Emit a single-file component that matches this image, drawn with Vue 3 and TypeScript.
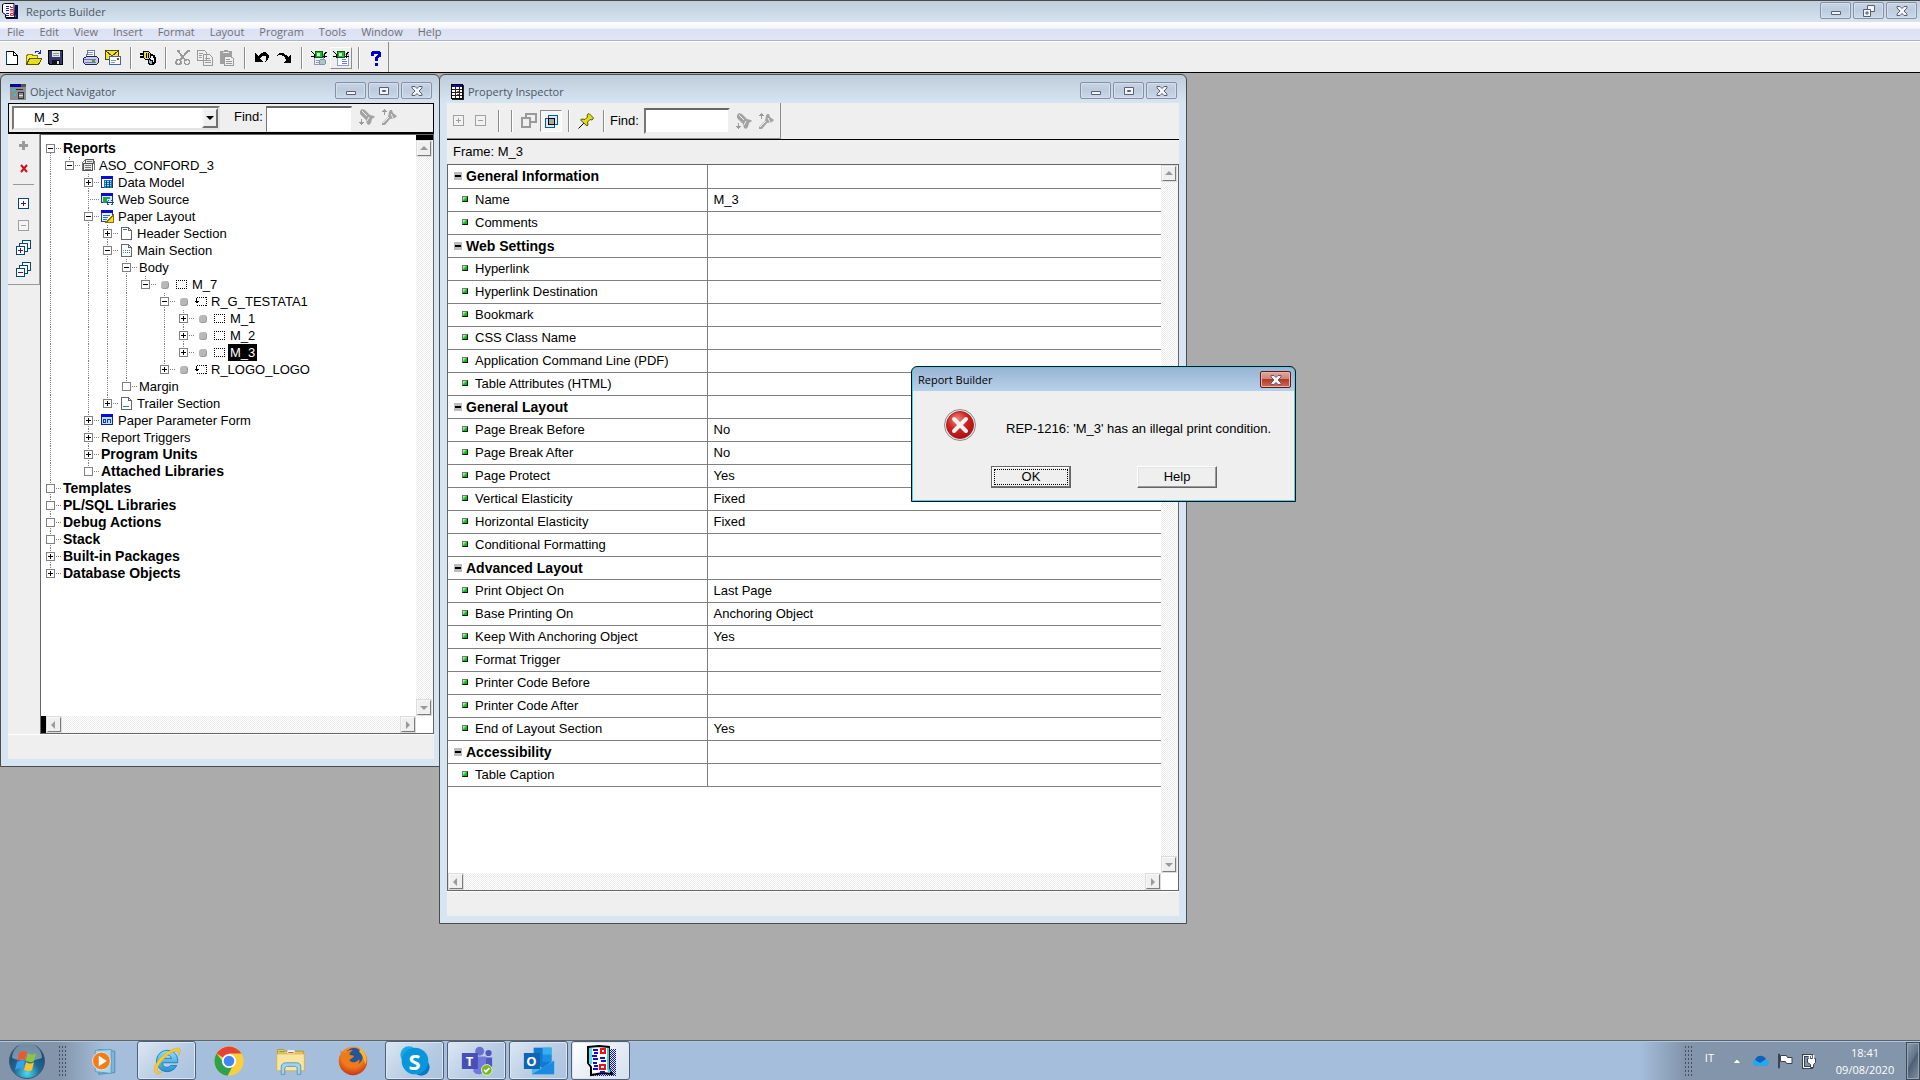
<script setup lang="ts">
import { ref } from 'vue'

interface TreeNode {
  label: string
  bold?: boolean
  icon?: string
  dot?: boolean
  state?: 'open' | 'closed' | 'empty' | 'leaf'
  children?: TreeNode[]
}

interface TreeRow extends TreeNode {
  guides: boolean[]
  last: boolean
  first: boolean
}

interface Property {
  name: string
  value?: string
  section?: boolean
}

interface Task {
  icon: string
  label: string
  open?: boolean
  active?: boolean
  mark?: string
}

const menus = ['File', 'Edit', 'View', 'Insert', 'Format', 'Layout', 'Program', 'Tools', 'Window', 'Help']

const toolGroups: { icon: string; label: string; raised?: boolean }[][] = [
  [{ icon: 'new', label: 'New' }, { icon: 'open', label: 'Open' }, { icon: 'save', label: 'Save' }],
  [{ icon: 'print', label: 'Print' }, { icon: 'mail', label: 'Mail' }],
  [{ icon: 'connect', label: 'Connect' }],
  [{ icon: 'cut', label: 'Cut' }, { icon: 'copy', label: 'Copy' }, { icon: 'paste', label: 'Paste' }],
  [{ icon: 'undo', label: 'Undo' }, { icon: 'redo', label: 'Redo' }],
  [{ icon: 'runweb', label: 'Run Web Layout' }, { icon: 'runpaper', label: 'Run Paper Layout', raised: true }],
  [{ icon: 'help', label: 'Help' }],
]

const tree: TreeNode[] = [
  {
    label: 'Reports', bold: true, state: 'open', children: [
      {
        label: 'ASO_CONFORD_3', icon: 't-report', state: 'open', children: [
          { label: 'Data Model', icon: 't-data', state: 'closed' },
          { label: 'Web Source', icon: 't-web', state: 'leaf' },
          {
            label: 'Paper Layout', icon: 't-paper', state: 'open', children: [
              { label: 'Header Section', icon: 't-head', state: 'closed' },
              {
                label: 'Main Section', icon: 't-main', state: 'open', children: [
                  {
                    label: 'Body', state: 'open', children: [
                      {
                        label: 'M_7', icon: 't-frame', dot: true, state: 'open', children: [
                          {
                            label: 'R_G_TESTATA1', icon: 't-repeat', dot: true, state: 'open', children: [
                              { label: 'M_1', icon: 't-frame', dot: true, state: 'closed' },
                              { label: 'M_2', icon: 't-frame', dot: true, state: 'closed' },
                              { label: 'M_3', icon: 't-frame', dot: true, state: 'closed' },
                            ],
                          },
                          { label: 'R_LOGO_LOGO', icon: 't-repeat', dot: true, state: 'closed' },
                        ],
                      },
                    ],
                  },
                  { label: 'Margin', state: 'empty' },
                ],
              },
              { label: 'Trailer Section', icon: 't-trail', state: 'closed' },
            ],
          },
          { label: 'Paper Parameter Form', icon: 't-form', state: 'closed' },
          { label: 'Report Triggers', state: 'closed' },
          { label: 'Program Units', bold: true, state: 'closed' },
          { label: 'Attached Libraries', bold: true, state: 'empty' },
        ],
      },
    ],
  },
  { label: 'Templates', bold: true, state: 'empty' },
  { label: 'PL/SQL Libraries', bold: true, state: 'empty' },
  { label: 'Debug Actions', bold: true, state: 'empty' },
  { label: 'Stack', bold: true, state: 'empty' },
  { label: 'Built-in Packages', bold: true, state: 'closed' },
  { label: 'Database Objects', bold: true, state: 'closed' },
]

function flatten(nodes: TreeNode[], guides: boolean[] = []): TreeRow[] {
  return nodes.flatMap((node, i) => {
    const last = i === nodes.length - 1
    const row: TreeRow = { ...node, guides, last, first: guides.length === 0 && i === 0 }
    return [row, ...flatten(node.children ?? [], [...guides, !last])]
  })
}

const rows = flatten(tree)
const selected = ref('M_3')

const properties: Property[] = [
  { name: 'General Information', section: true },
  { name: 'Name', value: 'M_3' },
  { name: 'Comments' },
  { name: 'Web Settings', section: true },
  { name: 'Hyperlink' },
  { name: 'Hyperlink Destination' },
  { name: 'Bookmark' },
  { name: 'CSS Class Name' },
  { name: 'Application Command Line (PDF)' },
  { name: 'Table Attributes (HTML)' },
  { name: 'General Layout', section: true },
  { name: 'Page Break Before', value: 'No' },
  { name: 'Page Break After', value: 'No' },
  { name: 'Page Protect', value: 'Yes' },
  { name: 'Vertical Elasticity', value: 'Fixed' },
  { name: 'Horizontal Elasticity', value: 'Fixed' },
  { name: 'Conditional Formatting' },
  { name: 'Advanced Layout', section: true },
  { name: 'Print Object On', value: 'Last Page' },
  { name: 'Base Printing On', value: 'Anchoring Object' },
  { name: 'Keep With Anchoring Object', value: 'Yes' },
  { name: 'Format Trigger' },
  { name: 'Printer Code Before' },
  { name: 'Printer Code After' },
  { name: 'End of Layout Section', value: 'Yes' },
  { name: 'Accessibility', section: true },
  { name: 'Table Caption' },
]

const tasks: Task[] = [
  { icon: 'wmp', label: 'Media Player' },
  { icon: 'ie', label: 'Internet Explorer', open: true },
  { icon: 'chrome', label: 'Chrome' },
  { icon: 'explorer', label: 'Explorer' },
  { icon: 'firefox', label: 'Firefox' },
  { icon: 'skype', label: 'Skype', open: true, mark: 'S' },
  { icon: 'teams', label: 'Teams', open: true, mark: 'T' },
  { icon: 'outlook', label: 'Outlook', open: true, mark: 'O' },
  { icon: 'builder', label: 'Reports Builder', open: true, active: true },
]
</script>

<template>
  <div class="screen">
    <svg class="sprite" aria-hidden="true">
      <defs>
        <radialGradient id="g-orb" cx="50%" cy="85%" r="80%">
          <stop offset="0" stop-color="#4fd8f5" /><stop offset=".45" stop-color="#1d6a94" /><stop offset="1" stop-color="#1f3f5c" />
        </radialGradient>
        <radialGradient id="g-err" cx="40%" cy="30%" r="75%">
          <stop offset="0" stop-color="#f08a80" /><stop offset=".5" stop-color="#cf2320" /><stop offset="1" stop-color="#a80d0d" />
        </radialGradient>
        <linearGradient id="g-ie" x1="0" y1="0" x2="0" y2="1">
          <stop offset="0" stop-color="#8fe0fa" /><stop offset="1" stop-color="#2292d4" />
        </linearGradient>
        <radialGradient id="g-ff" cx="50%" cy="30%" r="70%">
          <stop offset="0" stop-color="#ffc229" /><stop offset=".6" stop-color="#f0791a" /><stop offset="1" stop-color="#c93518" />
        </radialGradient>
        <pattern id="p-mesh" width="2" height="2" patternUnits="userSpaceOnUse">
          <path d="M0 0h1v1h-1zM1 1h1v1h-1z" fill="#1818a0" />
        </pattern>
      </defs>
      <symbol id="builder" viewBox="0 0 32 32">
        <path d="M8 4h23v27H8z" fill="url(#p-mesh)" />
        <path d="M3 2l11-1 10 1v22l3 5-9-1-12 2V22l-3-4z" fill="#fff" stroke="#000" stroke-width="2" />
        <path d="M4 3h3v16H4z" fill="#58e0e8" />
        <path d="M22 3h2v20l2 4h-3l-1-3z" fill="#38d8e0" />
        <path d="M8 5h5M9 8h4M7 11h5M8 14h5M8 18h4M9 21h4M8 24h5M15 13h5M16 16h5M15 27h5" stroke="#1010d8" stroke-width="2" />
        <path d="M16 4h4v4h-4zM15 20h5v4h-5z" fill="#fff" stroke="#f01010" stroke-width="2" />
      </symbol>
      <symbol id="builder-small" viewBox="0 0 16 16">
        <path d="M3 2h13v14H4z" fill="#101048" />
        <path d="M0.500 1.500l2-1h9.500v11l1 3H3.500v-3l-3-2z" fill="#fff" stroke="#000" />
        <path d="M12 1h1v10l1 3h-1z" fill="#5a78e0" />
        <path d="M4 3.500h3M4 5.500h3M4 7.500h3M4 10.500h3M4 12.500h3" stroke="#1818e8" />
        <path d="M8.500 3v1.500H11M8 6.500h3M8 8h3" fill="none" stroke="#f02020" />
        <path d="M8.500 10.500h3v2h-3z" fill="#fff" stroke="#f02020" />
      </symbol>
      <symbol id="new" viewBox="0 0 16 16"><path d="M2.500 1.500h7l4 4v9h-11z" fill="#fff" stroke="#000" /><path d="M9.500 1.500v4h4" fill="none" stroke="#000" /><path d="M2 1h1v14h-1z" fill="#00407c" /></symbol>
      <symbol id="open" viewBox="0 0 16 16"><path d="M.5 14V5h1l1-1h3l1 1h5v3" fill="#f5f03c" stroke="#8a8414" /><path d="M.5 14.500L3.500 8.500H16L12.500 14.500z" fill="#e8e010" stroke="#5a5600" /><path d="M9 2.500c2-2 4-1 5 1M14.500 0v4M11.500 3.500h3" fill="none" stroke="#1030c0" /></symbol>
      <symbol id="save" viewBox="0 0 16 16"><path d="M.5.500h14v14H2l-1.500-1.500z" fill="#38386a" stroke="#000" /><path d="M4 1h8v6H4z" fill="#dde6e6" /><path d="M5 3.500h6M5 5.500h6" stroke="#999" /><path d="M4 10h8v5H4z" fill="#111" /><path d="M9 11h2v3H9z" fill="#ddd" /></symbol>
      <symbol id="print" viewBox="0 0 16 16"><path d="M5 .5h6l1 6H3.500z" fill="#fff" stroke="#5878b8" /><path d="M5 2.500h5M5 4.500h5" stroke="#8899bb" /><path d="M.5 8.500l3-2h10l2 2v4l-2 2h-11l-2-2z" fill="#c8ccea" stroke="#222244" /><path d="M1 9.500h12M2 12.500h11" stroke="#7077b0" /><path d="M9 10h3v2H9z" fill="#30b030" /></symbol>
      <symbol id="mail" viewBox="0 0 16 16"><path d="M.5.500h13v9H.5z" fill="#f4e820" stroke="#504800" /><path d="M1 1l6 5 6-5" fill="none" stroke="#504800" /><path d="M4.500 6.500h11v8h-11z" fill="#fff" stroke="#4068a8" /><path d="M6 10.500h5M6 12.500h4" stroke="#7aa0d0" /><path d="M12 8h2v2h-2z" fill="#e02020" /></symbol>
      <symbol id="connect" viewBox="0 0 16 16"><path d="M0 3.500h4M0 6.500h4" stroke="#000" stroke-width="2" /><path d="M3.500 1.500h5l2 2v4l-2 2h-3l-2-2z" fill="#e4dc50" stroke="#000" /><path d="M6 3v5M8.500 3v5" stroke="#000" /><path d="M10 4c4 1 5 3 5 6s-1 4-3 4" fill="none" stroke="#000" stroke-width="2" /><path d="M8.500 9.500l4 1v4h-3l-1-2z" fill="#7fb4dc" stroke="#000" /></symbol>
      <symbol id="cut" viewBox="0 0 16 16"><path d="M13 1L5 10M3 1l8 10M2 1h3M12 1h3" fill="none" stroke="#9a9a9a" stroke-width="2" /><circle cx="3.500" cy="12" r="2.500" fill="none" stroke="#9a9a9a" stroke-width="1.500" /><circle cx="12" cy="12" r="2.500" fill="none" stroke="#9a9a9a" stroke-width="1.500" /></symbol>
      <symbol id="copy" viewBox="0 0 16 16"><path d="M.5.500h7l2 2v8h-9zM6.500 4.500h6l3 3v8h-9z" fill="#efefef" stroke="#9a9a9a" /><path d="M2 3.500h4M2 5.500h3M2 7.500h3M8 8.500h5M8 10.500h6M8 12.500h6" stroke="#9a9a9a" /></symbol>
      <symbol id="paste" viewBox="0 0 16 16"><path d="M1 1h3l2-1h2l2 1h3v13H1z" fill="#a0a0a0" /><path d="M4 2.500h6" stroke="#eee" /><path d="M5.500 6.500h6l3 2v7h-9z" fill="#efefef" stroke="#999" /><path d="M7 9.500h4M7 11.500h6M7 13.500h6" stroke="#999" /></symbol>
      <symbol id="undo" viewBox="0 0 16 16"><path d="M1 3v9h8l-3-3c2-3 5-4 6-3 1 2 0 4-1 7 4-3 5-8 2-10-3-2-7 0-9 3z" fill="#000" /></symbol>
      <symbol id="redo" viewBox="0 0 16 16"><path d="M15 4v9H7l3-3C9 7 6 4 3 5c-1 0-1 1-2 2 0-3 3-5 6-4 3 1 4 3 5 4z" fill="#000" /></symbol>
      <symbol id="runweb" viewBox="0 0 16 16"><path d="M3.500 4.500h9v10h-9z" fill="#eef2f8" stroke="#9098b0" /><path d="M0 1l3 3v4M16 2l-3 2v4M0 6.500h4M11 6.500h5" fill="none" stroke="#000" /><path d="M4.500 1.500h7v6h-7z" fill="#18c020" stroke="#0a5a10" /><path d="M6 3h3v3H6z" fill="#d8ffd8" /><path d="M5 10.500h3M5 12.500h3" stroke="#9098d0" /><circle cx="11.500" cy="12" r="3" fill="#a9cbb8" stroke="#7f8fc0" /></symbol>
      <symbol id="runpaper" viewBox="0 0 16 16"><path d="M4.500 4.500h11v11h-11z" fill="#fff" stroke="#8ca0d8" /><path d="M0 1l3 3v4M16 2l-3 2v4M0 6.500h4M11 6.500h5" fill="none" stroke="#000" /><path d="M4.500 1.500h7v6h-7z" fill="#18c020" stroke="#0a5a10" /><path d="M6 3h3v3H6z" fill="#d8ffd8" /><path d="M9 9.500h4M9 11.500h5M9 13.500h5" stroke="#7078d0" /></symbol>
      <symbol id="help" viewBox="0 0 16 16"><path d="M4.500 5.500V3.500L6 2h4l1.500 1.500v2L8 8v3" fill="none" stroke="#0000c8" stroke-width="3" /><path d="M6.500 12.500h3v3h-3z" fill="#0000c8" /></symbol>
      <symbol id="torch-down" viewBox="0 0 16 16"><path d="M1 2l2-2 3 1 5 5 4 1 1 1-3 2-1 4-2 2-2-1-1-4-6-6z" fill="#a3a3a3" /><path d="M3 2l5 5M10 8l-2 4" fill="none" stroke="#efefef" /><path d="M2.500 10v6M0 13.500h5M1 14.500h3" stroke="#9a9a9a" /></symbol>
      <symbol id="torch-up" viewBox="0 0 16 16"><path d="M1 14l6-6 1-5 1-2h2l1 3 4 3-2 2-5 1-5 6H1z" fill="#a3a3a3" /><path d="M2 14l6-6M10 5l2 4" fill="none" stroke="#efefef" /><path d="M3.500 0v6M1 2.500h5M2 1.500h3" stroke="#9a9a9a" /></symbol>
      <symbol id="nav-win" viewBox="0 0 16 16"><path d="M0 0h16v16H0z" fill="#8e8e8e" /><path d="M0 0h11v3H0z" fill="#0808a0" /><path d="M11 0h5v3h-5z" fill="#555" /><path d="M2 5h3v2H2zM4 10h2v2H4z" fill="#19d0d0" /><path d="M6 5.500h7M8.500 8.500h5v6h-5z" fill="none" stroke="#333" /><path d="M9 11.500h4" stroke="#ddd" /></symbol>
      <symbol id="prop-win" viewBox="0 0 16 16"><path d="M0.500.500h11v14H.5z" fill="#fff" stroke="#000" /><path d="M12 1h1v15H1v-1h11z" fill="#222" /><path d="M1 1h10v2H1z" fill="#1010a0" /><path d="M4.500 3v11M8.500 3v11M1 5.500h10M1 8.500h10M1 11.500h10" stroke="#222" /><path d="M6 7h2v1H6zM6 10h2v1H6z" fill="#d04040" /></symbol>

      <symbol id="t-report" viewBox="0 0 13 13"><path d="M3.500.500h8v4h-8zM1.500 4.500h9v7h-9z" fill="#e8e8e8" stroke="#555" /><path d="M.5 12V3.500l3-3M12.500 11V2M3 6.500h6M3 8.500h6M5 2.500h5M3 10.500h6" fill="none" stroke="#777" /></symbol>
      <symbol id="t-data" viewBox="0 0 13 13"><path d="M.5.500h11v11H.5z" fill="#fff" stroke="#222a88" /><path d="M0 0h12v3H0z" fill="#0a0ae0" /><path d="M3 4h8v8H3z" fill="#1c78b8" /><path d="M4 5.500h6M4 7.500h6M4 9.500h6" stroke="#9fe0f8" /><path d="M5.500 5v7M8.500 5v7" stroke="#104070" /></symbol>
      <symbol id="t-web" viewBox="0 0 13 13"><path d="M.5.500h11v9H.5z" fill="#cfeaf8" stroke="#2030a0" /><path d="M0 0h12v3H0z" fill="#0a0ae0" /><path d="M2 4h7v2L6 6v4H2z" fill="#28a048" /><path d="M7.500 7.500l-2 2 2 2.500M10.500 7.500l2 2-2 2.500" fill="none" stroke="#2858a8" /></symbol>
      <symbol id="t-paper" viewBox="0 0 13 13"><path d="M.5.500h11v11H.5z" fill="#e8f4fc" stroke="#2040a0" /><path d="M0 0h12v3H0z" fill="#0a0ae0" /><path d="M2 5.500h7M2 7.500h5M2 9.500h4" stroke="#3070c0" /><path d="M5 12.500L12.500 5v7.500z" fill="#f8d820" stroke="#907000" /></symbol>
      <symbol id="t-form" viewBox="0 0 13 13"><path d="M.5.500h11v10H.5z" fill="#b8e4f4" stroke="#1020a0" /><path d="M0 0h12v3H0z" fill="#0a0ae0" /><path d="M2.500 5.500h2v3h-2zM6.500 9V5.500h3v3" fill="none" stroke="#1838a0" /></symbol>
      <symbol id="t-head" viewBox="0 0 13 13"><path d="M1.500.500h7l3 3v9h-10z" fill="#fff" stroke="#666" /><path d="M8.500.500v3h3" fill="none" stroke="#666" /><path d="M3 2l1 1 1-1 1 1 1-1" fill="none" stroke="#208888" /></symbol>
      <symbol id="t-main" viewBox="0 0 13 13"><path d="M1.500.500h7l3 3v9h-10z" fill="#fff" stroke="#666" /><path d="M8.500.500v3h3" fill="none" stroke="#666" /><path d="M3 5.500l1 1 1-1 1 1 1-1 1 1 1-1 1 1M3 7.500l1 1 1-1 1 1 1-1 1 1 1-1 1 1" fill="none" stroke="#208888" stroke-width=".8" /></symbol>
      <symbol id="t-trail" viewBox="0 0 13 13"><path d="M1.500.500h7l3 3v9h-10z" fill="#fff" stroke="#666" /><path d="M8.500.500v3h3" fill="none" stroke="#666" /><path d="M3 9l1 1 1-1 1 1 1-1 1 1 1-1" fill="none" stroke="#208888" /></symbol>
      <symbol id="t-frame" viewBox="0 0 13 13"><path d="M1 2.500h11M1 10.500h11M1.500 2v9M11.500 2v9" fill="none" stroke="#000" stroke-dasharray="1 1" /></symbol>
      <symbol id="t-repeat" viewBox="0 0 13 13"><path d="M3 2.500h10M3 10.500h10M12.500 2v9" fill="none" stroke="#000" stroke-dasharray="1 1" /><path d="M2.500 3v5M1 6.500h4M2 7.500h2" stroke="#000" /></symbol>

      <symbol id="wmp" viewBox="0 0 36 36"><path d="M11 5l18 2v24l-18 2z" fill="#7eb6d8" stroke="#4c89b2" /><path d="M7 6l18-1v27L7 30z" fill="#a8d4ee" stroke="#5a98c0" /><circle cx="14" cy="18" r="10" fill="#f57c14" stroke="#e8e8e8" /><path d="M11 12l9 6-9 6z" fill="#fff" /></symbol>
      <symbol id="ie" viewBox="0 0 36 36"><path d="M18 6a12 12 0 1 0 11 17h-7c-3 4-9 2-9-3h17C31 12 26 6 18 6zm-5 9c1-5 9-5 10 0z" fill="url(#g-ie)" stroke="#1c78b8" /><path d="M6 32c-6-4 1-16 10-22C24 4 33 1 33 6c0 2-1 4-2 6 1-4 0-6-4-5C19 9 7 22 7 28c0 2 2 3 6 2-3 2-5 3-7 2z" fill="#f8cc30" stroke="#d8a010" stroke-width=".5" /></symbol>
      <symbol id="chrome" viewBox="0 0 36 36"><circle cx="18" cy="18" r="16.500" fill="#fbce3c" /><path d="M18 18L4 9.500A16.500 16.500 0 0 1 32 9.500H18z" fill="#e24436" /><path d="M18 18l-4.500 4L4 9.500A16.500 16.500 0 0 0 16.500 34.500L23 22z" fill="#2da24c" /><circle cx="18" cy="18" r="8" fill="#fff" /><circle cx="18" cy="18" r="6" fill="#4285f4" /></symbol>
      <symbol id="explorer" viewBox="0 0 36 36"><path d="M3 5h7l2 2h20v5H3z" fill="#e8c860" stroke="#b89230" /><path d="M14 6h8v5h-8z" fill="#fff" /><path d="M5 7h6v1H5z" fill="#40a060" /><path d="M15 8h6v1h-6z" fill="#d04030" /><path d="M2 10h31v19H2z" fill="#f9e4a0" stroke="#d4b050" /><path d="M7 30v-5c0-4 3-5 6-5h10c4 0 6 1 6 5v8h-4v-6c0-2-1-3-3-3h-8c-2 0-3 1-3 3v6H7z" fill="#a0d4f2" stroke="#5090bc" /></symbol>
      <symbol id="firefox" viewBox="0 0 36 36"><circle cx="18" cy="18" r="16" fill="url(#g-ff)" /><circle cx="19" cy="13" r="10" fill="#23559b" /><path d="M3 6c2 2 4 2 6 3 2-3 6-4 9-3-3 1-4 4-4 5l5 1c0 3-4 3-5 5 2 4 8 3 11-1 2 8-9 11-16 4C6 18 6 12 3 6z" fill="#ee7b1b" /><path d="M26 3c6 5 9 12 6 19-2-7-4-12-7-14z" fill="#ffb522" /></symbol>
      <symbol id="skype" viewBox="0 0 36 36"><circle cx="11" cy="11" r="9.500" fill="#1ca9e6" /><circle cx="25" cy="25" r="9.500" fill="#0878c8" /><circle cx="18" cy="18" r="15" fill="#0a96dc" /></symbol>
      <symbol id="teams" viewBox="0 0 36 36"><circle cx="21" cy="7" r="5" fill="#6870d0" /><circle cx="31" cy="9" r="3.500" fill="#5058c0" /><path d="M14 13h14v13a8 8 0 0 1-14 4z" fill="#7078dc" /><path d="M28 14h7v10c0 4-4 6-7 4z" fill="#5058c0" /><path d="M1 9h18v18H1z" fill="#4850b8" /><circle cx="29" cy="28" r="6" fill="#79b81c" stroke="#eef4e0" /><path d="M26 28l2 2 4-4" fill="none" stroke="#fff" stroke-width="2" /></symbol>
      <symbol id="outlook" viewBox="0 0 36 36"><path d="M12 3h20v24H12z" fill="#1478d0" /><path d="M22 3h10v8H22z" fill="#35b0ee" /><path d="M22 11h10v8H22z" fill="#1c90e0" /><path d="M10 18l12 8 13-9v16H10z" fill="#4ab8ee" /><path d="M10 33l25-15v15z" fill="#1c8ade" /><path d="M1 9h18v18H1z" fill="#0f64b4" /></symbol>
      <symbol id="orb" viewBox="0 0 38 38"><circle cx="19" cy="19" r="17.500" fill="url(#g-orb)" stroke="#40586e" /><path d="M4 16a15 15 0 0 1 30 0c-8 3-20 4-30 0z" fill="#b8ccdc" opacity=".55" /><path d="M11 11c3-2 5-2 8-1l-2 8c-3-1-5-1-8 1z" fill="#f0582c" /><path d="M20 11c3 2 5 2 8 0l-2 8c-3 2-5 1-8 0z" fill="#8cc63a" /><path d="M9 20c3-2 5-2 8-1l-2 8c-3-1-5-1-8 1z" fill="#38a0e8" /><path d="M18 20c3 2 5 2 8 0l-2 8c-3 2-5 1-8 0z" fill="#fbc42a" /></symbol>
    </svg>

    <header class="app-title">
      <svg class="app-icon"><use href="#builder-small" /></svg>
      <span class="caption-text">Reports Builder</span>
      <div class="caption-buttons">
        <button class="cap" aria-label="Minimize"><svg viewBox="0 0 12 12"><path d="M1.500 6.500h9v3h-9z" class="glyph-part" /></svg></button>
        <button class="cap" aria-label="Restore"><svg viewBox="0 0 12 12"><path d="M4.500.500h7v6h-7z" class="glyph-part" /><path d="M.5 4.500h7v7h-7z" class="glyph-part" /><path d="M3 7h2v2H3z" fill="#c4d2e4" stroke="#566178" /></svg></button>
        <button class="cap" aria-label="Close"><svg viewBox="0 0 12 12"><path d="M1 1.500h3l2 2 2-2h3v1.500L8 6l3 3v1.500H8l-2-2-2 2H1V9l3-3-3-3z" class="glyph-part" /></svg></button>
      </div>
    </header>

    <nav class="menu-bar">
      <button v-for="m in menus" :key="m" class="menu-item">{{ m }}</button>
    </nav>

    <div class="app-tools">
      <div class="tool-strip">
        <template v-for="(group, g) in toolGroups" :key="g">
          <span v-if="g" class="tool-sep"></span>
          <button v-for="t in group" :key="t.icon" class="tool" :class="{ raised: t.raised }" :aria-label="t.label">
            <svg class="i16 crisp"><use :href="'#' + t.icon" /></svg>
          </button>
        </template>
      </div>
    </div>

    <main class="desktop">
      <section class="window navigator" aria-label="Object Navigator">
        <header class="window-title">
          <svg class="i16 crisp"><use href="#nav-win" /></svg>
          <span class="caption-text">Object Navigator</span>
          <div class="caption-buttons">
            <button class="cap" aria-label="Minimize"><svg viewBox="0 0 12 12"><path d="M1.500 6.500h9v3h-9z" class="glyph-part" /></svg></button>
            <button class="cap" aria-label="Maximize"><svg viewBox="0 0 12 12"><path d="M1.500 2.500h9v7h-9z" class="glyph-part" /><path d="M4.500 5.500h3v1h-3z" class="glyph-part" /></svg></button>
            <button class="cap" aria-label="Close"><svg viewBox="0 0 12 12"><path d="M1 1.500h3l2 2 2-2h3v1.500L8 6l3 3v1.500H8l-2-2-2 2H1V9l3-3-3-3z" class="glyph-part" /></svg></button>
          </div>
        </header>

        <div class="nav-tools">
          <div class="combo">
            <select aria-label="Current object"><option>M_3</option></select>
            <span class="combo-arrow"></span>
          </div>
          <label for="nav-find" class="find-label">Find:</label>
          <input id="nav-find" class="find-input" type="text" />
          <button class="tool" aria-label="Find next"><svg class="i16"><use href="#torch-down" /></svg></button>
          <button class="tool" aria-label="Find previous"><svg class="i16"><use href="#torch-up" /></svg></button>
        </div>

        <div class="nav-body">
          <div class="palette-column">
            <div class="palette">
              <button class="pal" aria-label="Create"><svg class="i14 crisp" viewBox="0 0 14 14"><path d="M5 2h3v9H5zM2 5h9v3H2z" fill="#9a9a9a" /></svg></button>
              <button class="pal" aria-label="Delete"><svg class="i14" viewBox="0 0 14 14"><path d="M4 4l6 7M10 4l-6 7" stroke="#d01010" stroke-width="2" /></svg></button>
              <span class="pal-sep"></span>
              <button class="pal" aria-label="Expand"><svg class="i14 crisp" viewBox="0 0 14 14"><path d="M1.500 1.500h10v10h-10z" fill="#fff" stroke="#004878" /><path d="M4 6.500h5M6.500 4v5" stroke="#50107c" /></svg></button>
              <button class="pal" aria-label="Collapse"><svg class="i14 crisp" viewBox="0 0 14 14"><path d="M1.500 1.500h10v10h-10z" fill="#f4f4f4" stroke="#a0a0a0" /><path d="M4 6.500h5" stroke="#a0a0a0" /></svg></button>
              <button class="pal" aria-label="Expand all"><svg class="i16 crisp" viewBox="0 0 16 16"><path d="M6.500.500h8v8h-8z" fill="#fff" stroke="#004878" /><path d="M3.500 3.500h8v8h-8z" fill="#fff" stroke="#004878" /><path d="M.5 6.500h8v8h-8z" fill="#fff" stroke="#004878" /><path d="M2 10.500h5M4.500 8v5" stroke="#50107c" /></svg></button>
              <button class="pal" aria-label="Collapse all"><svg class="i16 crisp" viewBox="0 0 16 16"><path d="M6.500.500h8v8h-8z" fill="#fff" stroke="#004878" /><path d="M3.500 3.500h8v8h-8z" fill="#fff" stroke="#004878" /><path d="M.5 6.500h8v8h-8z" fill="#fff" stroke="#004878" /><path d="M2 10.500h5" stroke="#50107c" /></svg></button>
            </div>
          </div>

          <div class="pane tree-pane">
            <ul class="tree">
              <li v-for="(row, i) in rows" :key="i" class="row">
                <span v-for="(g, k) in row.guides" :key="k" class="guide" :class="{ line: g }"></span>
                <span class="joint" :class="{ last: row.last, first: row.first, leaf: row.state === 'leaf' }">
                  <button v-if="row.state !== 'leaf'" class="expander" :class="row.state" :aria-label="'Toggle ' + row.label"></button>
                </span>
                <span v-if="row.dot" class="dot"></span>
                <svg v-if="row.icon" class="i13 crisp"><use :href="'#' + row.icon" /></svg>
                <span class="node-label" :class="{ bold: row.bold, selected: row.label === selected }" @click="selected = row.label">{{ row.label }}</span>
              </li>
            </ul>
            <div class="vscroll with-stub">
              <button class="arrow up" aria-label="Scroll up"></button>
              <button class="arrow down" aria-label="Scroll down"></button>
            </div>
            <div class="hscroll with-stub">
              <button class="arrow left" aria-label="Scroll left"></button>
              <button class="arrow right" aria-label="Scroll right"></button>
            </div>
          </div>
        </div>
        <footer class="status"></footer>
      </section>

      <section class="window inspector" aria-label="Property Inspector">
        <header class="window-title">
          <svg class="i16 crisp"><use href="#prop-win" /></svg>
          <span class="caption-text">Property Inspector</span>
          <div class="caption-buttons">
            <button class="cap" aria-label="Minimize"><svg viewBox="0 0 12 12"><path d="M1.500 6.500h9v3h-9z" class="glyph-part" /></svg></button>
            <button class="cap" aria-label="Maximize"><svg viewBox="0 0 12 12"><path d="M1.500 2.500h9v7h-9z" class="glyph-part" /><path d="M4.500 5.500h3v1h-3z" class="glyph-part" /></svg></button>
            <button class="cap" aria-label="Close"><svg viewBox="0 0 12 12"><path d="M1 1.500h3l2 2 2-2h3v1.500L8 6l3 3v1.500H8l-2-2-2 2H1V9l3-3-3-3z" class="glyph-part" /></svg></button>
          </div>
        </header>

        <div class="prop-tools">
          <div class="prop-strip">
            <button class="tool" aria-label="Expand all"><svg class="i14 crisp" viewBox="0 0 14 14"><path d="M1.500 1.500h10v10h-10z" fill="#f2f2f2" stroke="#a0a0a0" /><path d="M4 6.500h5M6.500 4v5" stroke="#a0a0a0" /></svg></button>
            <button class="tool" aria-label="Collapse all"><svg class="i14 crisp" viewBox="0 0 14 14"><path d="M1.500 1.500h10v10h-10z" fill="#f2f2f2" stroke="#a0a0a0" /><path d="M4 6.500h5" stroke="#a0a0a0" /></svg></button>
            <span class="tool-sep"></span>
            <span class="tool-sep"></span>
            <button class="tool" aria-label="Union"><svg class="i16 crisp" viewBox="0 0 16 16"><path d="M5 1h10v8H5z" fill="none" stroke="#9a9a9a" stroke-width="1.500" /><path d="M1 5h8v9H1z" fill="#efefef" stroke="#9a9a9a" stroke-width="1.500" /><path d="M6 6V4.500h4" fill="none" stroke="#9a9a9a" /></svg></button>
            <button class="tool pressed" aria-label="Intersection"><svg class="i16 crisp" viewBox="0 0 16 16"><path d="M5.500 2.500h9v9h-9zM2.500 5.500h9v9h-9z" fill="#dce8ee" stroke="#00609c" /><path d="M5.500 5.500h6v6h-6z" fill="#a8a8a8" stroke="#000" /></svg></button>
            <span class="tool-sep"></span>
            <button class="tool" aria-label="Pin"><svg class="i16" viewBox="0 0 16 16"><path d="M6.500 9.500L.5 15.500" stroke="#000" /><path d="M9 2l2-1.500 4.500 4.500L14 7l-2-.5L9.500 9l.5 3-1 1L2.500 7l1.500-1 3 .5L9.500 4z" fill="#e4dc18" stroke="#5a5600" /></svg></button>
            <span class="tool-sep"></span>
            <label for="prop-find" class="find-label">Find:</label>
            <input id="prop-find" class="find-input" type="text" />
            <button class="tool" aria-label="Find next"><svg class="i16"><use href="#torch-down" /></svg></button>
            <button class="tool" aria-label="Find previous"><svg class="i16"><use href="#torch-up" /></svg></button>
          </div>
        </div>
        <div class="frame-name">Frame: M_3</div>

        <div class="pane prop-pane">
          <div class="table-area">
            <table class="props">
              <colgroup><col class="col-name" /><col /></colgroup>
              <tbody>
                <tr v-for="p in properties" :key="p.name">
                  <th scope="row" :class="{ section: p.section }">
                    <div class="cell"><span :class="p.section ? 'minus' : 'bullet'"></span>{{ p.name }}</div>
                  </th>
                  <td>{{ p.value }}</td>
                </tr>
              </tbody>
            </table>
          </div>
          <div class="vscroll">
            <button class="arrow up" aria-label="Scroll up"></button>
            <button class="arrow down" aria-label="Scroll down"></button>
          </div>
          <div class="hscroll">
            <button class="arrow left" aria-label="Scroll left"></button>
            <button class="arrow right" aria-label="Scroll right"></button>
          </div>
        </div>
        <footer class="status"></footer>
      </section>

      <section class="dialog" role="alertdialog" aria-label="Report Builder">
        <header class="dialog-title">
          <span>Report Builder</span>
          <button class="cap red" aria-label="Close"><svg viewBox="0 0 12 12"><path d="M1 1.500h3l2 2 2-2h3v1.500L8 6l3 3v1.500H8l-2-2-2 2H1V9l3-3-3-3z" class="glyph-part" /></svg></button>
        </header>
        <div class="dialog-body">
          <div class="message">
            <svg class="error-icon" viewBox="0 0 32 32"><circle cx="16" cy="16" r="15.500" fill="#e8e8e8" stroke="#8c8c8c" /><circle cx="16" cy="16" r="13.500" fill="url(#g-err)" stroke="#a82020" /><path d="M10 10l12 12M22 10L10 22" stroke="#f4f4f4" stroke-width="4" stroke-linecap="round" /></svg>
            <p>REP-1216: 'M_3' has an illegal print condition.</p>
          </div>
          <div class="actions">
            <button class="push default"><span>OK</span></button>
            <button class="push"><span>Help</span></button>
          </div>
        </div>
      </section>
    </main>

    <footer class="taskbar">
      <button class="start" aria-label="Start"><svg><use href="#orb" /></svg></button>
      <span class="grip"></span>
      <div class="tasks">
        <button v-for="t in tasks" :key="t.icon" class="task" :class="[t.icon, { open: t.open, active: t.active }]" :aria-label="t.label">
          <svg><use :href="'#' + t.icon" /></svg>
          <span v-if="t.mark" class="mark">{{ t.mark }}</span>
        </button>
      </div>
      <div class="tray">
        <span class="grip"></span>
        <span class="lang">IT</span>
        <button class="tray-icon" aria-label="Show hidden icons"><svg viewBox="0 0 16 16"><path d="M4 10.500h8L8 6z" fill="#fff" stroke="#5a6678" stroke-width=".5" /></svg></button>
        <button class="tray-icon" aria-label="OneDrive"><svg viewBox="0 0 16 16"><path d="M2 13c-3-1-3-6 1-7 2-5 9-4 10 1 4 0 4 5 1 6z" fill="#28a8ea" /><path d="M2 7c2-6 9-5 11-1L7 10z" fill="#0f62b8" /></svg></button>
        <button class="tray-icon" aria-label="Action Center"><svg viewBox="0 0 16 16"><path d="M2.500 1v14h-1V1z" fill="#fff" stroke="#3a4454" /><path d="M3.500 2.500h6l1 2h4.500v6H9.500l-1-2h-5z" fill="#fff" stroke="#3a4454" /></svg></button>
        <button class="tray-icon" aria-label="Power"><svg viewBox="0 0 16 16"><path d="M2.500 2.500h8v12h-8z" fill="none" stroke="#39414f" stroke-width="3" /><path d="M2.500 2.500h8v12h-8z" fill="none" stroke="#fff" /><path d="M6.500 5.500h8v4l-2 2v3h-3v-3l-3-2z" fill="#fff" stroke="#39414f" /><path d="M8.500 2v4M12.500 2v4" stroke="#fff" stroke-width="1.500" /></svg></button>
        <div class="clock"><span>18:41</span><span>09/08/2020</span></div>
        <button class="show-desktop" aria-label="Show desktop"></button>
      </div>
    </footer>
  </div>
</template>

<style>
html,
body {
  margin: 0;
  background: #ababab;
}
</style>

<style scoped>
.screen {
  display: flex;
  flex-direction: column;
  min-height: 100vh;
  font-family: "Liberation Sans", Arial, sans-serif;
  font-size: 13px;
  line-height: 16px;
  color: #000;
}
.screen * { box-sizing: border-box; }
.sprite { position: absolute; width: 0; height: 0; }
button, input, select { font: inherit; color: inherit; margin: 0; padding: 0; border: 0; border-radius: 0; background: none; }
svg { display: block; flex: none; }
.crisp { shape-rendering: crispEdges; }
.i16 { width: 16px; height: 16px; }
.i14 { width: 14px; height: 14px; }
.i13 { width: 13px; height: 13px; }

/* Main window caption, menu and toolbar */
.app-title {
  display: flex;
  align-items: center;
  height: 22px;
  padding: 0 3px 0 2px;
  border-top: 1px solid #4a4a4a;
  background: linear-gradient(#bfcddc, #d6e3f0);
}
.app-icon { width: 16px; height: 16px; margin: 0 8px 2px 0; }
.caption-text { font: 11px/16px "Open Sans", sans-serif; color: #4c5763; flex: 1; }
.caption-buttons { display: flex; gap: 2px; }
.app-title .caption-buttons { height: 19px; }
.cap {
  display: flex;
  align-items: center;
  justify-content: center;
  width: 31px;
  height: 17px;
  border: 1px solid #8391ab;
  border-radius: 2px;
  background: linear-gradient(#c8d5e4, #bccbdd 45%, #cbd8e8);
  box-shadow: inset 0 0 0 1px #d5dfeb;
}
.cap svg { width: 12px; height: 12px; }
.glyph-part { fill: #f4f4f4; stroke: #566178; }
.menu-bar {
  display: flex;
  gap: 1px;
  height: 19px;
  border-bottom: 1px solid #aab2cc;
  background: linear-gradient(#fff, #f2f4fa 35%, #dce1f3 40%, #e1e6f6);
}
.menu-item { padding: 0 7px; font: 11px/20px "Open Sans", sans-serif; color: #6f6f75; }
.app-tools { height: 32px; background: #efefef; border-bottom: 1px solid #000; border-top: 1px solid #fff; }
.tool-strip { display: flex; align-items: center; width: max-content; height: 30px; padding: 2px 1px 0; border-right: 1px solid #8c8c8c; }
.tool { display: flex; align-items: center; justify-content: center; flex: none; width: 22px; height: 22px; }
.raised { border: 1px solid; border-color: #fff #8c8c8c #8c8c8c #fff; }
.pressed { border: 1px solid; border-color: #8c8c8c #fff #fff #8c8c8c; background: #f6f6f6; }
.tool-sep { flex: none; width: 13px; height: 22px; background: linear-gradient(90deg, transparent 6px, #8c8c8c 6px, #8c8c8c 7px, #fff 7px, #fff 8px, transparent 8px); }

/* MDI canvas */
.desktop { position: relative; flex: 1; min-height: 864px; overflow: hidden; background: #ababab; }
.window {
  position: absolute;
  top: 1px;
  display: flex;
  flex-direction: column;
  border: 1px solid #4c4c4c;
  border-radius: 6px 6px 0 0;
  background: linear-gradient(#bfcddb, #d7e4f2 28px);
}
.navigator { left: 0; width: 440px; height: 693px; padding: 0 5px 7px 7px; }
.inspector { left: 439px; width: 748px; height: 850px; padding: 0 7px 7px; }
.window-title { display: flex; align-items: center; flex: none; height: 28px; padding: 5px 2px 0; }
.inspector .window-title { padding-left: 4px; }
.window-title .caption-text { margin-left: 4px; }
.inspector .caption-text { margin-left: 1px; }
.window-title .caption-buttons { height: 19px; }
.status { flex: none; height: 25px; background: #efefef; border-top: 1px solid #fff; }

.nav-tools {
  display: flex;
  flex: none;
  height: 31px;
  padding: 2px 3px 0;
  border: 1px solid #000;
  border-bottom-width: 2px;
  background: #efefef;
}
.combo { position: relative; width: 208px; height: 24px; border: 2px solid; border-color: #777 #e4e4e4 #e4e4e4 #777; background: #fff; }
.combo select { width: 100%; height: 100%; padding-left: 20px; appearance: none; outline: 0; }
.combo-arrow { position: absolute; top: 0; right: 0; width: 16px; height: 20px; border: 2px solid; border-color: #f6f6f6 #707070 #707070 #f6f6f6; background: #efefef; pointer-events: none; }
.combo-arrow::after { content: ""; position: absolute; left: 2px; top: 6px; border: 4px solid transparent; border-top-color: #000; border-bottom: 0; }
.find-label { padding: 3px 3px 0 14px; }
.find-input { width: 86px; height: 26px; border: 2px solid; border-color: #666 #efefef #efefef #777; background: #fff; outline: 0; }
.nav-tools .find-input { border-width: 1px; border-top-width: 2px; }
.nav-tools .find-input + .tool { margin-left: 4px; }

.nav-body { display: flex; flex: 1; min-height: 0; }
.palette-column { flex: none; width: 32px; background: #efefef; }
.palette { display: flex; flex-direction: column; align-items: center; padding: 1px 0 3px; border-right: 1px solid #999; border-bottom: 1px solid #999; }
.pal { display: flex; align-items: center; justify-content: center; width: 22px; height: 22px; }
.pal-sep { width: 21px; height: 14px; background: linear-gradient(transparent 5px, #999 5px, #999 6px, transparent 6px); }
.pane {
  display: grid;
  flex: 1;
  grid-template: 1fr 17px / 1fr 17px;
  min-height: 0;
  min-width: 0;
  border: 1px solid #666;
  background: #fff;
}
.tree { list-style: none; margin: 0; padding: 5px 0 0; overflow: hidden; }
.row { display: flex; align-items: center; height: 17px; white-space: nowrap; }
.guide { flex: none; width: 19px; height: 17px; }
.guide.line { background: repeating-linear-gradient(#808080 0 1px, transparent 1px 2px) 9px 0 / 1px 100% no-repeat; }
.joint {
  position: relative;
  display: flex;
  align-items: center;
  flex: none;
  width: 22px;
  height: 17px;
  padding-left: 5px;
  background:
    repeating-linear-gradient(#808080 0 1px, transparent 1px 2px) 9px 0 / 1px 17px no-repeat,
    repeating-linear-gradient(90deg, #808080 0 1px, transparent 1px 2px) 9px 8px / 12px 1px no-repeat;
}
.joint.last { background-size: 1px 8px, 12px 1px; }
.joint.first { background-position: 9px 9px, 9px 8px; }
.expander { position: relative; width: 9px; height: 9px; border: 1px solid #808080; background: #fff; }
.expander.open { background: linear-gradient(#000, #000) 1px 3px / 5px 1px no-repeat #fff; }
.expander.closed { background: linear-gradient(#000, #000) 1px 3px / 5px 1px no-repeat, linear-gradient(#000, #000) 3px 1px / 1px 5px no-repeat #fff; }
.dot { flex: none; width: 8px; height: 8px; margin: 0 6px 0 3px; border-radius: 3px; background: #b8b8b8; border-right: 1px solid #999; border-bottom: 1px solid #999; }
.node-label { line-height: 17px; padding: 0 2px; margin-left: 2px; }
.joint + .node-label { margin-left: -2px; }
.bold { font-size: 14px; font-weight: bold; }
.selected { background: #000; color: #fff; }

.vscroll, .hscroll { display: flex; justify-content: space-between; background: repeating-conic-gradient(#fff 0 25%, #ececec 0 50%) 0 0 / 2px 2px; }
.vscroll { flex-direction: column; }
.vscroll.with-stub { border-top: 5px solid #000; }
.hscroll.with-stub { border-left: 5px solid #000; }
.arrow { position: relative; width: 16px; height: 17px; border: 2px solid; border-color: #f8f8f8 #7c7c7c #7c7c7c #f8f8f8; outline: 1px solid #dcdcdc; outline-offset: -1px; background: #efefef; }
.arrow::after { content: ""; position: absolute; border: 4px solid transparent; }
.up::after { left: 2px; top: 4px; border-bottom-color: #9a9a9a; border-top: 0; }
.down::after { left: 2px; top: 5px; border-top-color: #9a9a9a; border-bottom: 0; }
.left::after { left: 3px; top: 3px; border-right-color: #9a9a9a; border-left: 0; }
.right::after { left: 4px; top: 3px; border-left-color: #9a9a9a; border-right: 0; }

/* Property inspector */
.prop-tools { flex: none; height: 37px; background: #efefef; border-bottom: 1px solid #000; }
.prop-strip { display: flex; align-items: center; width: max-content; height: 36px; padding-right: 3px; border-right: 1px solid #8c8c8c; border-bottom: 1px solid #8c8c8c; }
.prop-strip .tool:first-child { margin-left: 1px; }
.prop-strip .tool-sep + .find-label { padding: 0 5px 0 0; }
.prop-strip .find-input + .tool { margin-left: 3px; }
.frame-name { flex: none; height: 24px; padding-left: 6px; line-height: 24px; background: #efefef; }
.table-area { overflow: hidden; }
.props { width: 100%; border-collapse: collapse; table-layout: fixed; }
.col-name { width: 259px; }
.props th, .props td { height: 23px; padding: 0; border-bottom: 1px solid #808080; text-align: left; font-weight: normal; }
.props td { padding-left: 6px; border-left: 1px solid #808080; }
.props th.section { font-size: 14px; font-weight: bold; }
.cell { display: flex; align-items: center; }
.minus { width: 8px; height: 8px; margin: 0 4px 0 6px; background: linear-gradient(#000, #000) 1px 3px / 6px 2px no-repeat #bdbdbd; }
.bullet { width: 6px; height: 6px; margin: 0 7px 2px 14px; background: linear-gradient(135deg, #9f9 20%, #00c010 60%); border: 1px solid; border-color: #777 #111 #111 #777; }

/* Error dialog */
.dialog {
  position: absolute;
  left: 911px;
  top: 293px;
  width: 385px;
  height: 136px;
  display: flex;
  flex-direction: column;
  border: 1px solid #101010;
  border-radius: 6px 6px 0 0;
  box-shadow: inset 0 0 0 1px #40d4f0;
  background: linear-gradient(#98b4d2, #b9d1ea 25px);
  padding: 0 1px 1px;
}
.dialog-title { display: flex; align-items: center; justify-content: space-between; flex: none; height: 24px; padding: 1px 3px 0 5px; font: 11px/16px "Open Sans", sans-serif; }
.cap.red { border-color: #5c1c1c; background: linear-gradient(#e4a69a, #d1857a 45%, #b53a24 50%, #cf6a54); box-shadow: inset 0 0 0 1px #e8b4a8; }
.dialog-body { flex: 1; background: #efefef; padding: 18px 0 0 31px; }
.message { display: flex; align-items: center; }
.error-icon { width: 32px; height: 32px; margin-right: 30px; }
.message p { margin: 8px 0 0; white-space: nowrap; }
.actions { display: flex; gap: 66px; padding: 25px 0 0 47px; }
.push { width: 80px; height: 22px; border: 1px solid; border-color: #fff #666 #666 #fff; box-shadow: inset -1px -1px #9a9a9a, inset 1px 1px #e2e2e2; background: #efefef; }
.push span { display: block; line-height: 20px; }
.push.default { padding: 2px; border-color: #666; box-shadow: inset -1px -1px #777, inset 1px 1px #fff; }
.push.default span { border: 1px dotted #000; line-height: 14px; }

/* Taskbar */
.taskbar {
  display: flex;
  align-items: center;
  height: 40px;
  border-top: 1px solid #5a6470;
  box-shadow: inset 0 1px #b4c6da;
  background: linear-gradient(90deg, #8395ab 60px, #a4bedb 104px, #a4bedb calc(100% - 280px), #8395ab calc(100% - 236px));
}
.start { width: 54px; height: 38px; padding-left: 8px; }
.start svg { width: 38px; height: 38px; }
.grip { flex: none; width: 9px; height: 31px; margin-left: 4px; background: radial-gradient(circle, #444f5e 1px, transparent 1px) 0 0 / 3px 4px; }
.tasks { display: flex; gap: 3px; margin-left: 8px; flex: 1; }
.task { position: relative; display: flex; align-items: center; justify-content: center; width: 59px; height: 39px; border: 1px solid transparent; border-radius: 3px; }
.task svg { width: 32px; height: 32px; }
.task.open { border-color: #51607a; box-shadow: inset 0 0 0 1px #dbe6f2; background: linear-gradient(135deg, #dce7f3, #b6cbe2 60%, #aac3df); }
.task.active { background: linear-gradient(135deg, #fff, #e4ebf4 60%, #d4e0ee); }
.mark { position: absolute; left: 13px; top: 11px; width: 17px; text-align: center; font: bold 13px/16px "Open Sans", sans-serif; color: #fff; }
.skype .mark { left: 0; top: 7px; width: 100%; font-size: 22px; line-height: 24px; }
.tray { display: flex; align-items: center; height: 100%; color: #fff; font: 11px/17px "Open Sans", sans-serif; }
.lang { margin: 0 11px 6px 12px; }
.tray-icon { width: 24px; height: 24px; padding: 4px; }
.tray-icon svg { width: 16px; height: 16px; }
.clock { display: flex; flex-direction: column; align-items: center; width: 82px; margin: 0 0 0 3px; padding-top: 1px; }
.show-desktop { width: 14px; height: 38px; border: 1px solid #3d4a5a; background: linear-gradient(120deg, #8d9bac, #64758a 45%, #4d5f76 50%, #8593a5); box-shadow: inset 0 0 0 1px #97a5b7; }
</style>
